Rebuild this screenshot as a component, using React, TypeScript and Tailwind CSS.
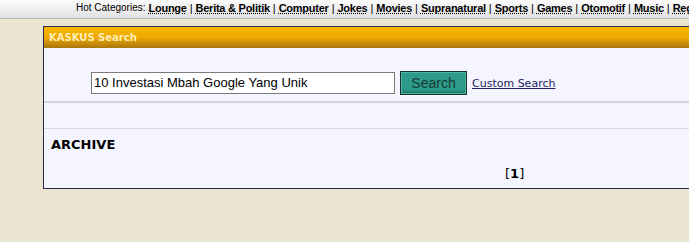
import React from "react";

const cats = ["Lounge", "Berita & Politik", "Computer", "Jokes", "Movies", "Supranatural", "Sports", "Games", "Otomotif", "Music", "Regional"];

export default function App() {
  return (
    <div className="w-[689px] h-[242px] overflow-hidden bg-[#EAE5D1]">
      <div className="h-[19px] bg-gradient-to-b from-[#fbfbfb] to-[#e2e2e2] border-b border-[#b9b8b0] flex items-start pt-[1px] pl-[76px] whitespace-nowrap text-black leading-[14px]" style={{ fontFamily: '"Liberation Sans", Arial, sans-serif' }}>
        <span className="text-[10px] mr-[3px]">Hot Categories:</span>
        {cats.map((c, i) => (
          <span key={c} className="flex text-[11px]">
            {i > 0 && <span className="px-[3px]">|</span>}
            <a className="font-bold underline decoration-dotted text-black tracking-[-0.25px]">{c}</a>
          </span>
        ))}
      </div>
      <div className="ml-[43px] mt-[7px] w-[700px] border border-[#2b2b4f] bg-[#F5F5FF]" style={{ fontFamily: '"DejaVu Sans", Verdana, sans-serif' }}>
        <div className="h-[21px] bg-gradient-to-b from-[#F9B800] via-[#EFA800] to-[#A8780E] flex items-center pl-[5px] text-[10px] font-bold text-[#FFEFB5]">
          KASKUS Search
        </div>
        <div className="h-[53px] flex items-start pl-[47px]">
          <div className="mt-[24px] w-[304px] h-[22px] border border-[#7a7a7a] bg-white flex items-center pl-[2px] text-[13px] text-black" style={{ fontFamily: '"Liberation Sans", Arial, sans-serif' }}>
            10 Investasi Mbah Google Yang Unik
          </div>
          <div className="mt-[23px] ml-[5px] w-[67px] h-[24px] border border-[#17322e] bg-[#2E9B8A] shadow-[inset_0_0_0_1px_#4cb5a4,inset_0_-2px_3px_#1b6a5e] flex items-center justify-center text-[14px] text-[#173a33]" style={{ fontFamily: '"Liberation Sans", Arial, sans-serif' }}>
            Search
          </div>
          <a className="mt-[29px] ml-[5px] text-[11px] leading-[13px] underline text-[#24245e]">Custom Search</a>
        </div>
        <div className="h-[2px] bg-[#D2D2DC]" />
        <div className="h-[25px]" />
        <div className="h-px bg-[#D6D6E2]" />
        <div className="h-[59px]">
          <div className="pl-[7px] pt-[9px] text-[13px] font-bold text-black leading-[14px]">ARCHIVE</div>
          <div className="pl-[461px] pt-[15px] text-[13px] text-black leading-[14px]">
            [<b>1</b>]
          </div>
        </div>
      </div>
    </div>
  );
}
